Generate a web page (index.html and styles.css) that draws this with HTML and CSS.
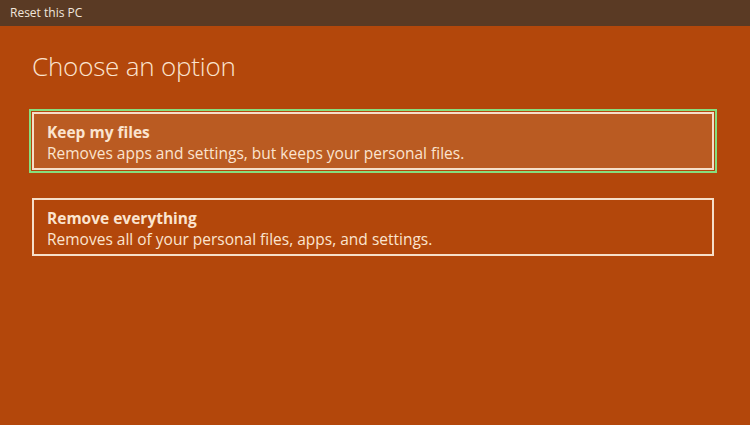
FILE: index.html
```html
<!DOCTYPE html>
<html lang="en">
<head>
<meta charset="utf-8">
<title>Reset this PC</title>
<link rel="stylesheet" href="styles.css">
</head>
<body>
<div class="titlebar">Reset this PC</div>
<main class="content">
  <h1 class="heading">Choose an option</h1>
  <div class="options">
    <div class="option option-focused">
      <div class="option-title">Keep my files</div>
      <div class="option-desc">Removes apps and settings, but keeps your personal files.</div>
    </div>
    <div class="option">
      <div class="option-title">Remove everything</div>
      <div class="option-desc">Removes all of your personal files, apps, and settings.</div>
    </div>
  </div>
</main>
</body>
</html>
```
FILE: styles.css
```css
html, body {
  margin: 0;
  padding: 0;
}
body {
  width: 750px;
  height: 425px;
  background: #b3470b;
  font-family: "Open Sans", "Noto Sans", "Liberation Sans", sans-serif;
  color: #fbe4cf;
  overflow: hidden;
}
.titlebar {
  height: 26px;
  background: #5a3a24;
  color: #f1e6dc;
  font-size: 12px;
  line-height: 26px;
  padding-left: 10px;
  box-sizing: border-box;
}
.content {
  padding: 0 36px 0 32px;
}
.heading {
  margin: 0;
  padding-top: 22px;
  font-size: 26px;
  font-weight: 300;
  line-height: 36px;
  letter-spacing: -0.2px;
}
.options {
  display: flex;
  flex-direction: column;
  gap: 28px;
  margin-top: 28px;
}
.option {
  border: 2px solid #f6dfc9;
  padding: 8px 13px 4px;
  font-size: 15.5px;
  line-height: 21px;
}
.option-focused {
  background: #ba5b22;
  outline: 2px solid #86df7e;
  outline-offset: 1px;
}
.option-title {
  font-weight: 700;
}
.option-desc {
  font-weight: 400;
}
```
